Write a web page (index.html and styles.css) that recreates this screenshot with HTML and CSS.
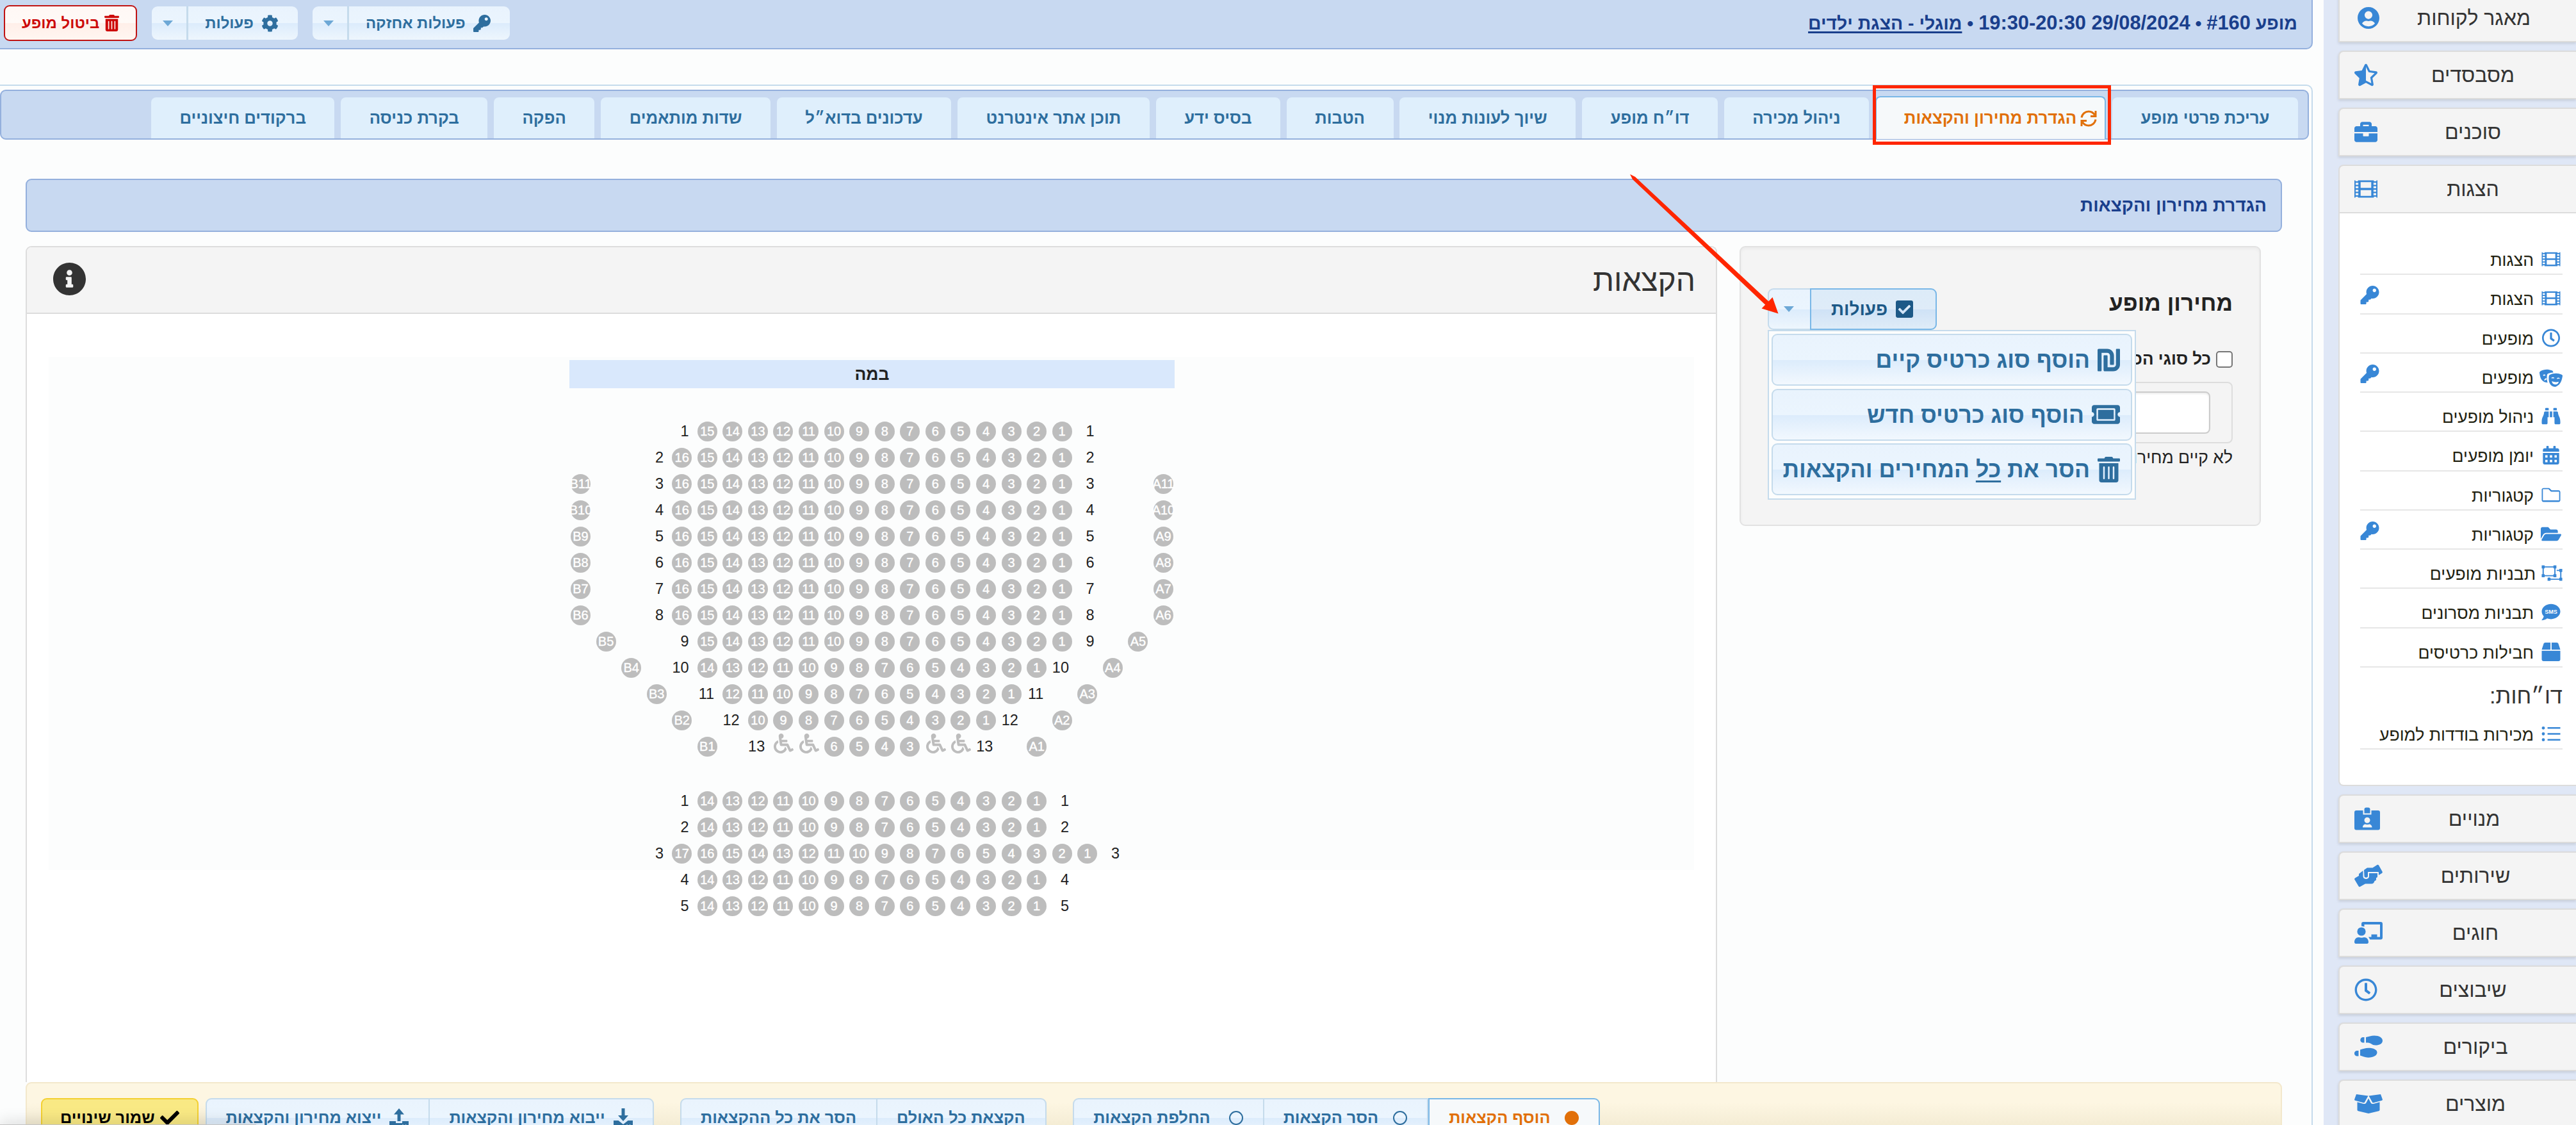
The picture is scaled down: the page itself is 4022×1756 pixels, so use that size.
FILE: index.html
```html
<!DOCTYPE html>
<html lang="he" dir="rtl">
<head>
  <meta charset="UTF-8">
  <meta name="viewport" content="width=device-width, initial-scale=1.0">
  <title>הגדרת מחירון והקצאות</title>
  <link rel="stylesheet" href="styles.css">
</head>
<body>
  <!-- icons -->
  <svg class="sprite" aria-hidden="true">
    <symbol id="i-key" viewBox="0 0 512 512"><path d="M512 176.001C512 273.203 433.202 352 336 352c-11.22 0-22.19-1.062-32.827-3.069l-24.012 27.014A23.999 23.999 0 0 1 261.223 384H224v40c0 13.255-10.745 24-24 24h-40v40c0 13.255-10.745 24-24 24H24c-13.255 0-24-10.745-24-24v-78.059c0-6.365 2.529-12.47 7.029-16.971l161.802-161.802C163.108 213.814 160 195.271 160 176 160 78.798 238.797.001 335.999 0 433.488-.001 512 78.511 512 176.001zM336 128c0 26.51 21.49 48 48 48s48-21.49 48-48-21.49-48-48-48-48 21.49-48 48z"/></symbol>
    <symbol id="i-trash" viewBox="0 0 448 512"><path d="M32 464a48 48 0 0 0 48 48h288a48 48 0 0 0 48-48V128H32zm272-256a16 16 0 0 1 32 0v224a16 16 0 0 1-32 0zm-96 0a16 16 0 0 1 32 0v224a16 16 0 0 1-32 0zm-96 0a16 16 0 0 1 32 0v224a16 16 0 0 1-32 0zM432 32H312l-9.4-18.7A24 24 0 0 0 281.1 0H166.8a23.72 23.72 0 0 0-21.4 13.3L136 32H16A16 16 0 0 0 0 48v32a16 16 0 0 0 16 16h416a16 16 0 0 0 16-16V48a16 16 0 0 0-16-16z"/></symbol>
    <symbol id="i-cog" viewBox="0 0 512 512"><path d="M487.4 315.7l-42.6-24.6c4.3-23.2 4.3-47 0-70.2l42.6-24.6c4.9-2.8 7.1-8.6 5.5-14-11.1-35.6-30-67.8-54.7-94.6-3.8-4.1-10-5.1-14.8-2.3L380.8 110c-17.9-15.4-38.5-27.3-60.8-35.1V25.8c0-5.6-3.9-10.5-9.4-11.7-36.7-8.2-74.3-7.8-109.2 0-5.5 1.2-9.4 6.1-9.4 11.7V75c-22.2 7.9-42.8 19.8-60.8 35.1L88.7 85.5c-4.9-2.8-11-1.9-14.8 2.3-24.7 26.7-43.6 58.9-54.7 94.6-1.7 5.4.6 11.2 5.5 14L67.3 221c-4.3 23.2-4.3 47 0 70.2l-42.6 24.6c-4.9 2.8-7.1 8.6-5.5 14 11.1 35.6 30 67.8 54.7 94.6 3.8 4.1 10 5.1 14.8 2.3l42.6-24.6c17.9 15.4 38.5 27.3 60.8 35.1v49.2c0 5.6 3.9 10.5 9.4 11.7 36.7 8.2 74.3 7.8 109.2 0 5.5-1.2 9.4-6.1 9.4-11.7v-49.2c22.2-7.9 42.8-19.8 60.8-35.1l42.6 24.6c4.9 2.8 11 1.9 14.8-2.3 24.7-26.7 43.6-58.9 54.7-94.6 1.5-5.5-.7-11.3-5.6-14.1zM256 336c-44.1 0-80-35.9-80-80s35.9-80 80-80 80 35.9 80 80-35.9 80-80 80z"/></symbol>
    <symbol id="i-info" viewBox="8 8 496 496"><path d="M256 8C119.043 8 8 119.083 8 256c0 136.997 111.043 248 248 248s248-111.003 248-248C504 119.083 392.957 8 256 8zm0 110c23.196 0 42 18.804 42 42s-18.804 42-42 42-42-18.804-42-42 18.804-42 42-42zm56 254c0 6.627-5.373 12-12 12h-88c-6.627 0-12-5.373-12-12v-24c0-6.627 5.373-12 12-12h12v-64h-12c-6.627 0-12-5.373-12-12v-24c0-6.627 5.373-12 12-12h64c6.627 0 12 5.373 12 12v100h12c6.627 0 12 5.373 12 12v24z"/></symbol>
    <symbol id="i-check-square" viewBox="0 32 448 448"><path d="M400 480H48c-26.51 0-48-21.49-48-48V80c0-26.51 21.49-48 48-48h352c26.51 0 48 21.49 48 48v352c0 26.51-21.49 48-48 48zm-204.686-98.059l184-184c6.248-6.248 6.248-16.379 0-22.627l-22.627-22.627c-6.248-6.248-16.379-6.249-22.628 0L184 302.745l-70.059-70.059c-6.248-6.248-16.379-6.248-22.628 0l-22.627 22.627c-6.248 6.248-6.248 16.379 0 22.627l104 104c6.249 6.25 16.379 6.25 22.628.001z"/></symbol>
    <symbol id="i-check" viewBox="0 0 512 512"><path d="M173.898 439.404l-166.4-166.4c-9.997-9.997-9.997-26.206 0-36.204l36.203-36.204c9.997-9.998 26.207-9.998 36.204 0L192 312.69 432.095 72.596c9.997-9.997 26.207-9.997 36.204 0l36.203 36.204c9.997 9.997 9.997 26.206 0 36.204l-294.4 294.401c-9.998 9.997-26.207 9.997-36.204-.001z"/></symbol>
    <symbol id="i-shekel" viewBox="0 0 448 512"><path d="M248 168v168c0 8.84 7.16 16 16 16h48c8.84 0 16-7.16 16-16V168c0-75.11-60.89-136-136-136H24C10.75 32 0 42.74 0 56v408c0 8.84 7.16 16 16 16h48c8.84 0 16-7.16 16-16V112h112c30.93 0 56 25.07 56 56zM432 32h-48c-8.84 0-16 7.16-16 16v296c0 30.93-25.07 56-56 56H200V176c0-8.84-7.16-16-16-16h-48c-8.84 0-16 7.16-16 16v280c0 13.25 10.75 24 24 24h168c75.11 0 136-60.89 136-136V48c0-8.84-7.16-16-16-16z"/></symbol>
    <symbol id="i-ticket" viewBox="0 0 576 512"><path d="M128 160h320v192H128V160zm400 96c0 26.51 21.49 48 48 48v96c0 26.51-21.49 48-48 48H48c-26.51 0-48-21.49-48-48v-96c26.51 0 48-21.49 48-48s-21.49-48-48-48v-96c0-26.51 21.49-48 48-48h480c26.51 0 48 21.49 48 48v96c-26.51 0-48 21.49-48 48zm-48-104c0-13.255-10.745-24-24-24H120c-13.255 0-24 10.745-24 24v208c0 13.255 10.745 24 24 24h336c13.255 0 24-10.745 24-24V152z"/></symbol>
    <symbol id="i-clock" viewBox="0 0 512 512"><path d="M256 8C119 8 8 119 8 256s111 248 248 248 248-111 248-248S393 8 256 8zm0 448c-110.5 0-200-89.5-200-200S145.5 56 256 56s200 89.5 200 200-89.5 200-200 200zm61.8-104.4l-84.9-61.7c-3.1-2.3-4.9-5.9-4.9-9.7V116c0-6.6 5.4-12 12-12h32c6.6 0 12 5.4 12 12v141.7l66.8 48.6c5.4 3.9 6.5 11.4 2.6 16.8L334.6 349c-3.9 5.3-11.4 6.5-16.8 2.6z"/></symbol>
    <symbol id="i-star" viewBox="0 0 536 512"><path d="M508.55 171.51L362.18 150.2 296.77 17.81C290.89 5.98 279.42 0 267.95 0c-11.4 0-22.79 5.9-28.69 17.81l-65.43 132.38-146.38 21.29c-26.25 3.8-36.77 36.09-17.74 54.59l105.89 103-25.06 145.48C86.98 495.33 103.57 512 122.15 512c4.93 0 10-1.17 14.87-3.75l130.95-68.68 130.94 68.7c4.86 2.55 9.92 3.71 14.83 3.71 18.6 0 35.22-16.61 31.66-37.4l-25.03-145.49 105.91-102.98c19.04-18.5 8.52-50.8-17.73-54.6zm-121.74 123.2l-18.12 17.62 4.28 24.88 19.52 113.45-102.13-53.59-22.38-11.74.03-317.19 51.03 103.29 11.18 22.63 25.01 3.64 114.23 16.63-82.65 80.38z"/></symbol>
    <symbol id="i-briefcase" viewBox="0 0 512 512"><path d="M320 336c0 8.84-7.16 16-16 16h-96c-8.84 0-16-7.16-16-16v-48H0v144c0 25.6 22.4 48 48 48h416c25.6 0 48-22.4 48-48V288H320v48zm144-208h-80V80c0-25.6-22.4-48-48-48H176c-25.6 0-48 22.4-48 48v48H48c-25.6 0-48 22.4-48 48v80h512v-80c0-25.6-22.4-48-48-48zm-144 0H192V96h128v32z"/></symbol>
    <symbol id="i-film" viewBox="0 0 512 512"><path fill-rule="evenodd" d="M0 64h24v22h56V64h352v22h56V64h24v384h-24v-22h-56v22H80v-22H24v22H0zM138 104v128h236V104zM138 280v128h236V280zM28 118v44h60v-44zM28 194v44h60v-44zM28 274v44h60v-44zM28 350v44h60v-44zM424 118v44h60v-44zM424 194v44h60v-44zM424 274v44h60v-44zM424 350v44h60v-44z"/></symbol>
    <symbol id="i-user" viewBox="0 8 496 496"><path d="M248 8C111 8 0 119 0 256s111 248 248 248 248-111 248-248S385 8 248 8zm0 96c48.6 0 88 39.4 88 88s-39.4 88-88 88-88-39.4-88-88 39.4-88 88-88zm0 344c-58.7 0-111.3-26.6-146.5-68.2 18.8-35.4 55.6-59.8 98.5-59.8 2.4 0 4.8.4 7.1 1.1 13 4.2 26.6 6.9 40.9 6.9 14.3 0 28-2.7 40.9-6.9 2.3-.7 4.7-1.1 7.1-1.1 42.9 0 79.7 24.4 98.5 59.8C359.3 421.4 306.7 448 248 448z"/></symbol>
    <symbol id="i-masks" viewBox="0 0 640 512"><path fill-rule="evenodd" d="M206 246c4-82 2-96 52-112 40-13 82-19 124-20-2-28-14-46-38-56C240 14 120 20 24 76 6 88-2 102 0 122c14 92 30 240 190 268 14 2 24 2 36 2-18-48-24-90-20-146zM98 190c12-24 48-30 68-10l-6 22c-16-8-34-4-48 6zM130 322c12-30 34-48 62-52l4 40c-18 0-32 8-44 24zM616 172c-98-50-222-50-330 4-14 8-22 18-24 34-12 112-6 226 106 286 30 16 66 20 98 4 126-58 154-174 174-292 2-16-8-28-24-36zM330 262c20-26 62-26 80-2l-8 18c-20-14-46-12-62 2zM464 444c-70 10-118-32-120-90 54 26 122 36 190 14-6 40-30 70-70 76zM482 276c18-26 60-28 80-2l-8 18c-20-12-44-12-62 2z"/></symbol>
    <symbol id="i-binoculars" viewBox="0 0 512 512"><path d="M416 48c0-8.84-7.16-16-16-16h-64c-8.84 0-16 7.16-16 16v48h96V48zM63.91 159.99C61.4 253.84 3.46 274.22 0 404v44c0 17.67 14.33 32 32 32h96c17.67 0 32-14.33 32-32V288h32V128H95.84c-17.63 0-31.45 14.37-31.93 31.99zm384.18 0c-.48-17.62-14.3-31.99-31.93-31.99H320v160h32v160c0 17.67 14.33 32 32 32h96c17.67 0 32-14.33 32-32v-44c-3.46-129.78-61.4-150.16-63.91-244.01zM176 32h-64c-8.84 0-16 7.16-16 16v48h96V48c0-8.84-7.16-16-16-16zm48 256h64V128h-64v160z"/></symbol>
    <symbol id="i-calendar" viewBox="0 0 448 512"><path fill-rule="evenodd" d="M0 464c0 26.5 21.5 48 48 48h352c26.5 0 48-21.5 48-48V192H0zM64 256h64v64H64zM192 256h64v64h-64zM320 256h64v64h-64zM64 384h64v64H64zM192 384h64v64h-64zM320 384h64v64h-64zM400 64h-48V16c0-8.8-7.2-16-16-16h-32c-8.8 0-16 7.2-16 16v48H160V16c0-8.8-7.2-16-16-16h-32c-8.8 0-16 7.2-16 16v48H48C21.5 64 0 85.5 0 112v48h448v-48c0-26.5-21.5-48-48-48z"/></symbol>
    <symbol id="i-folder" viewBox="0 0 512 512"><path d="M464 128H272l-54.63-54.63c-6-6-14.14-9.37-22.63-9.37H48C21.49 64 0 85.49 0 112v288c0 26.51 21.49 48 48 48h416c26.51 0 48-21.49 48-48V176c0-26.51-21.49-48-48-48zm16 280H32V96h155l55 60c6 6 14 10 23 10H480z"/></symbol>
    <symbol id="i-folder-open" viewBox="0 0 576 512"><path d="M572.694 292.093L500.27 416.248A63.997 63.997 0 0 1 444.989 448H45.025c-18.523 0-30.064-20.093-20.731-36.093l72.424-124.155A64 64 0 0 1 152 256h399.964c18.523 0 30.064 20.093 20.73 36.093zM152 224h328v-48c0-26.51-21.49-48-48-48H272l-64-64H48C21.49 64 0 85.49 0 112v278.046l69.077-118.418C86.214 242.25 117.989 224 152 224z"/></symbol>
    <symbol id="i-group" viewBox="0 40 576 416"><g fill="none" stroke="currentColor" stroke-width="34"><path d="M48 80h320v240H48zM416 176h112v240H208v-46"/></g><path fill-rule="evenodd" d="M8 40h80v80H8zm28 28v24h24V68zM328 40h80v80h-80zm28 28v24h24V68zM8 280h80v80H8zm28 28v24h24v-24zM328 280h80v80h-80zm28 28v24h24v-24zM488 136h80v80h-80zm28 28v24h24v-24zM488 376h80v80h-80zm28 28v24h24v-24zM168 376h80v80h-80zm28 28v24h24v-24z"/></symbol>
    <symbol id="i-box" viewBox="0 0 512 512"><path d="M509.5 184.6L458.9 32.8C452.4 13.2 434.1 0 413.4 0H272v192h238.7c-.4-2.5-.4-5-1.2-7.4zM240 0H98.6c-20.7 0-39 13.2-45.5 32.8L2.5 184.6c-.8 2.4-.8 4.9-1.2 7.4H240V0zM0 224v240c0 26.5 21.5 48 48 48h416c26.5 0 48-21.5 48-48V224H0z"/></symbol>
    <symbol id="i-list" viewBox="0 0 512 512"><path d="M160 72h352v44H160zM160 234h352v44H160zM160 396h352v44H160z"/><circle cx="44" cy="94" r="42"/><circle cx="44" cy="256" r="42"/><circle cx="44" cy="418" r="42"/></symbol>
    <symbol id="i-id" viewBox="0 0 40 35"><path fill-rule="evenodd" d="M3 4.500h10.500V11h13V4.500H37a3 3 0 0 1 3 3V32a3 3 0 0 1-3 3H3a3 3 0 0 1-3-3V7.500a3 3 0 0 1 3-3zM20 15.200a4.500 4.500 0 1 0 0 9 4.500 4.500 0 0 0 0-9zM13 31h14.500c0-3.500-2.500-5-4.500-5-2 .8-4 .8-5.500 0-2.500 0-4.500 1.500-4.500 5z"/><path d="M15.500 9V3a3 3 0 0 1 3-3h3a3 3 0 0 1 3 3v6z"/></symbol>
    <symbol id="i-hands" viewBox="0 0 44 35"><path d="M13.500 9.500V18c0 6 9.500 6 9.500 0v-4.500h13v5c0 1.500-1 2-2 2v2.500c0 1.500-1 2.500-2.500 2.500-.5 2.500-2 4.500-5 4.500h-9.500L9 34.500c-1 .6-2 .3-2.500-.7L.4 23.500c-.6-1-.3-2 .7-2.500L7 17.500V14.500z"/><path d="M15 8.500L20 5h8.500L35.500.5c1-.6 2-.3 2.500.6l5.600 10c.5 1 .2 1.800-.7 2.300l-5 3v-4.800H21V18c0 3-5.500 3-5.500 0z"/></symbol>
    <symbol id="i-class" viewBox="0 0 44 35"><path d="M11 7V3.500A3 3 0 0 1 14 .5h27a3 3 0 0 1 3 3V25a3 3 0 0 1-3 3H24.500l-2.500-4h4.500v-4h9v4h4.500V4.500H15.500V8z"/><circle cx="11" cy="15.500" r="6.600"/><path d="M0 32c0-4 2.500-7.500 7-7.500 3 1 5.500 1 8 0 4.500 0 7 3.500 7 7.500 0 1.500-1 2.500-2 2.500H2c-1 0-2-1-2-2.500z"/></symbol>
    <symbol id="i-shoes" viewBox="0 0 44 35"><path d="M18 2.500C22 1.500 26 0 31 0c8 0 13 3.500 13 8s-5 7-11 7c-6 0-7-4-12-4h-3zM15.500 2.500V11h-2a4.200 4.200 0 0 1 0-8.500zM9 22c4-1 8-2.700 13-2.700 8 0 13.500 2.700 13.500 7s-5 8-14 8c-5 0-8.500-2-12.500-3.200zM6.500 23.500V32H4.200a4.200 4.200 0 0 1 0-8.500z"/></symbol>
    <symbol id="i-open-box" viewBox="0 0 44 30"><path d="M3 0l18.500 2.500-5.500 10c-.4.7-1 1-2 .8L1.200 9.800C.2 9.500-.2 8.800.2 7.800zM41 0L22.500 2.500l5.500 10c.4.700 1 1 2 .8l12.800-3.500c1-.3 1.400-1 1-2zM22 6.500l-3.500 6.700c-.8 1.400-2.500 2.200-4.200 1.800L4.500 12.300v12c0 1 .7 1.800 1.700 2L22 30l15.800-3.700c1-.2 1.700-1 1.700-2v-12L29.700 15c-1.700.4-3.400-.4-4.200-1.800z"/></symbol>
    <symbol id="i-wheelchair" viewBox="0 0 512 512"><path d="M496.101 385.669l14.227 28.663c3.929 7.915.697 17.516-7.218 21.445l-65.465 32.886c-16.049 7.967-35.556 1.194-43.189-15.055L331.679 320H192c-15.925 0-29.426-11.71-31.679-27.475C126.433 55.308 128.38 70.044 128 64c0-36.358 30.318-65.635 67.052-63.929 33.271 1.545 60.048 28.905 60.925 62.201.868 32.933-23.152 60.423-54.608 65.039l4.67 32.69H336c8.837 0 16 7.163 16 16v32c0 8.837-7.163 16-16 16H215.182l4.572 32H352a32 32 0 0 1 28.962 18.392L438.477 396.8l36.178-18.349c7.915-3.929 17.517-.697 21.446 7.218zM311.358 352h-24.506c-7.788 54.204-54.528 96-110.852 96-61.757 0-112-50.243-112-112 0-41.505 22.694-77.809 56.324-97.156-3.712-25.965-6.844-47.86-9.488-66.333C45.956 198.464 0 261.963 0 336c0 97.047 78.953 176 176 176 71.87 0 133.806-43.308 161.11-105.192L311.358 352z"/></symbol>
    <symbol id="i-refresh" viewBox="0 0 26 26"><g fill="none" stroke="currentColor" stroke-width="3"><path d="M2 11.500C3 5.500 8 2 13 2c4 0 7.500 2 9.500 5.500M24 1v8.500H16M24 14.500c-1 6-6 9.500-11 9.500-4 0-7.500-2-9.500-5.500M2 25v-8.500H10"/></g></symbol>
    <symbol id="i-import" viewBox="0 0 30 30"><path fill-rule="evenodd" d="M12.500 0h5v11H23l-8 9-8-9h5.500zM0 19h7.500l7.500 6 7.500-6H30v9a2 2 0 0 1-2 2H2a2 2 0 0 1-2-2zM20 25.500v2h2v-2zM24.500 25.500v2h2v-2z"/></symbol>
    <symbol id="i-export" viewBox="0 0 30 30"><path fill-rule="evenodd" d="M12.500 20V9.500H7L15 0l8 9.500h-5.500V20zM0 20h10v3h10v-3h10v8a2 2 0 0 1-2 2H2a2 2 0 0 1-2-2zM20 25.500v2h2v-2zM24.500 25.500v2h2v-2z"/></symbol>
  </svg>

  <aside class="sidebar">
    <a class="menu-item"><span>מאגר לקוחות</span><svg class="w34"><use href="#i-user"/></svg></a>
    <a class="menu-item"><span>מסבסדים</span><svg class="w36"><use href="#i-star"/></svg></a>
    <a class="menu-item"><span>סוכנים</span><svg class="w36"><use href="#i-briefcase"/></svg></a>
    <a class="menu-item open"><span>הצגות</span><svg class="w36"><use href="#i-film"/></svg></a>
    <div class="submenu">
      <a class="sub-item"><svg><use href="#i-film"/></svg><span>הצגות</span></a>
      <a class="sub-item"><svg><use href="#i-film"/></svg><span>הצגות</span><svg class="key"><use href="#i-key"/></svg></a>
      <a class="sub-item"><svg><use href="#i-clock"/></svg><span>מופעים</span></a>
      <a class="sub-item"><svg class="big"><use href="#i-masks"/></svg><span>מופעים</span><svg class="key"><use href="#i-key"/></svg></a>
      <a class="sub-item"><svg><use href="#i-binoculars"/></svg><span>ניהול מופעים</span></a>
      <a class="sub-item"><svg><use href="#i-calendar"/></svg><span>יומן מופעים</span></a>
      <a class="sub-item"><svg><use href="#i-folder"/></svg><span>קטגוריות</span></a>
      <a class="sub-item"><svg class="mid"><use href="#i-folder-open"/></svg><span>קטגוריות</span><svg class="key"><use href="#i-key"/></svg></a>
      <a class="sub-item"><svg class="grp"><use href="#i-group"/></svg><span>תבניות מופעים</span></a>
      <a class="sub-item"><svg viewBox="0 0 512 512"><path d="M256 32C114.6 32 0 125.1 0 240c0 49.6 21.4 95 57 130.7C44.5 421.1 2.7 466 2.2 466.5c-2.2 2.3-2.8 5.7-1.5 8.7S4.8 480 8 480c66.3 0 116-31.8 140.6-51.4 32.7 12.3 69 19.4 107.4 19.4 141.4 0 256-93.1 256-208S397.4 32 256 32z"/><text x="256" y="296" class="sms-text">SMS</text></svg><span>תבניות מסרונים</span></a>
      <a class="sub-item"><svg><use href="#i-box"/></svg><span>חבילות כרטיסים</span></a>
      <div class="sub-title">דו״חות:</div>
      <a class="sub-item"><svg><use href="#i-list"/></svg><span>מכירות בודדות למופע</span></a>
    </div>
    <a class="menu-item"><span>מנויים</span><svg class="w40"><use href="#i-id"/></svg></a>
    <a class="menu-item"><span>שירותים</span><svg class="w44"><use href="#i-hands"/></svg></a>
    <a class="menu-item"><span>חוגים</span><svg class="w44"><use href="#i-class"/></svg></a>
    <a class="menu-item"><span>שיבוצים</span><svg class="w36"><use href="#i-clock"/></svg></a>
    <a class="menu-item"><span>ביקורים</span><svg class="w44"><use href="#i-shoes"/></svg></a>
    <a class="menu-item"><span>מוצרים</span><svg class="w44"><use href="#i-open-box"/></svg></a>
  </aside>

  <main class="main">
    <header class="event-bar">
      <h1>מופע <span class="num" dir="ltr">#160</span> • <span class="num" dir="ltr">19:30-20:30 29/08/2024</span> • <a>מוגלי - הצגת ילדים</a></h1>
      <div class="event-actions">
        <div class="split small">
          <button class="btn"><svg><use href="#i-key"/></svg>פעולות אחזקה</button>
          <button class="btn arrow"><i class="caret"></i></button>
        </div>
        <div class="split small">
          <button class="btn"><svg><use href="#i-cog"/></svg>פעולות</button>
          <button class="btn arrow"><i class="caret"></i></button>
        </div>
        <button class="btn cancel"><svg><use href="#i-trash"/></svg>ביטול מופע</button>
      </div>
    </header>

    <section class="tabs-box">
      <nav class="tabs">
        <a>עריכת פרטי מופע</a>
        <a class="active"><svg><use href="#i-refresh"/></svg>הגדרת מחירון והקצאות</a>
        <a>ניהול מכירה</a>
        <a>דו״ח מופע</a>
        <a>שיוך לעונות מנוי</a>
        <a>הטבות</a>
        <a>בסיס ידע</a>
        <a>תוכן אתר אינטרנט</a>
        <a>עדכונים בדוא״ל</a>
        <a>שדות מותאמים</a>
        <a>הפקה</a>
        <a>בקרת כניסה</a>
        <a>ברקודים חיצוניים</a>
      </nav>

      <h2 class="section-title">הגדרת מחירון והקצאות</h2>

      <div class="content">
        <div class="price-card">
          <div class="price-head">
            <h3>מחירון מופע</h3>
            <div class="split">
              <button class="btn hover"><svg><use href="#i-check-square"/></svg>פעולות</button>
              <button class="btn arrow"><i class="caret"></i></button>
              <div class="dropdown">
                <a><svg><use href="#i-shekel"/></svg><span>הוסף סוג כרטיס קיים</span></a>
                <a><svg class="ticket"><use href="#i-ticket"/></svg><span>הוסף סוג כרטיס חדש</span></a>
                <a><svg><use href="#i-trash"/></svg><span>הסר את <u>כל</u> המחירים והקצאות</span></a>
              </div>
            </div>
          </div>
          <label class="all-types"><i class="checkbox"></i>כל סוגי הכרטיסים</label>
          <div class="filter"><div class="field"></div></div>
          <p class="empty">לא קיים מחירון למופע</p>
        </div>

        <div class="alloc">
          <div class="alloc-head">
            <h3>הקצאות</h3>
            <svg><use href="#i-info"/></svg>
          </div>
          <div class="map">
            <div class="hall" id="hall" dir="ltr">
              <div class="stage">במה</div>
            </div>
          </div>
        </div>
      </div>

      <footer class="toolbar">
        <div class="group">
          <button class="btn active"><i class="dot full"></i>הוסף הקצאות</button>
          <button class="btn"><i class="dot"></i>הסר הקצאות</button>
          <button class="btn wide"><i class="dot"></i>החלפת הקצאות</button>
        </div>
        <div class="group">
          <button class="btn">הקצאת כל האולם</button>
          <button class="btn">הסר את כל ההקצאות</button>
        </div>
        <div class="group">
          <button class="btn"><svg><use href="#i-import"/></svg>ייבוא מחירון והקצאות</button>
          <button class="btn"><svg><use href="#i-export"/></svg>ייצוא מחירון והקצאות</button>
        </div>
        <button class="btn save"><svg><use href="#i-check"/></svg>שמור שינויים</button>
      </footer>
    </section>
  </main>

  <!-- guide marks over the page -->
  <div class="mark-box"></div>
  <svg class="mark-arrow" viewBox="0 0 240 225"><path d="M4 2l8 4L221 201l-5 5.500L8 10z"/><path d="M235.500 219.500l-26-8 17-17.500z"/></svg>
  <div class="status-edge"></div>

  <script>
    // c = column of the first seat, n = highest seat number, l/r = label columns
    // a/b = side seats: [column, name]
    const upper = [
      { row: 1, l: 4, c: 5, n: 15, r: 20 },
      { row: 2, l: 3, c: 4, n: 16, r: 20 },
      { row: 3, l: 3, c: 4, n: 16, r: 20, b: [0, 'B11'], a: [23, 'A11'] },
      { row: 4, l: 3, c: 4, n: 16, r: 20, b: [0, 'B10'], a: [23, 'A10'] },
      { row: 5, l: 3, c: 4, n: 16, r: 20, b: [0, 'B9'], a: [23, 'A9'] },
      { row: 6, l: 3, c: 4, n: 16, r: 20, b: [0, 'B8'], a: [23, 'A8'] },
      { row: 7, l: 3, c: 4, n: 16, r: 20, b: [0, 'B7'], a: [23, 'A7'] },
      { row: 8, l: 3, c: 4, n: 16, r: 20, b: [0, 'B6'], a: [23, 'A6'] },
      { row: 9, l: 4, c: 5, n: 15, r: 20, b: [1, 'B5'], a: [22, 'A5'] },
      { row: 10, l: 4, c: 5, n: 14, r: 19, b: [2, 'B4'], a: [21, 'A4'] },
      { row: 11, l: 5, c: 6, n: 12, r: 18, b: [3, 'B3'], a: [20, 'A3'] },
      { row: 12, l: 6, c: 7, n: 10, r: 17, b: [4, 'B2'], a: [19, 'A2'] },
      { row: 13, l: 7, c: 8, n: 8, r: 16, b: [5, 'B1'], a: [18, 'A1'], wheels: [8, 7, 2, 1] }
    ];
    const lower = [
      { row: 1, l: 4, c: 5, n: 14, r: 19 },
      { row: 2, l: 4, c: 5, n: 14, r: 19 },
      { row: 3, l: 3, c: 4, n: 17, r: 21 },
      { row: 4, l: 4, c: 5, n: 14, r: 19 },
      { row: 5, l: 4, c: 5, n: 14, r: 19 }
    ];

    function cell(cls, col, html) {
      return `<span class="${cls}" style="grid-column:${col + 1}">${html}</span>`;
    }

    function drawBlock(rows) {
      const block = document.createElement('div');
      block.className = 'block';
      for (const r of rows) {
        let html = '';
        if (r.b) html += cell('seat', r.b[0], r.b[1]);
        html += cell('label', r.l, r.row);
        for (let i = 0; i < r.n; i++) {
          const num = r.n - i;
          if (r.wheels && r.wheels.includes(num)) {
            html += cell('wheel', r.c + i, '<svg><use href="#i-wheelchair"/></svg>');
          } else {
            html += cell('seat', r.c + i, num);
          }
        }
        html += cell('label', r.r, r.row);
        if (r.a) html += cell('seat', r.a[0], r.a[1]);
        const line = document.createElement('div');
        line.className = 'row';
        line.innerHTML = html;
        block.appendChild(line);
      }
      document.getElementById('hall').appendChild(block);
    }

    drawBlock(upper);
    drawBlock(lower);
  </script>
</body>
</html>
```
FILE: styles.css
```css
* {
  box-sizing: border-box;
}
body {
  margin: 0;
  height: 1756px;
  overflow: hidden;
  position: relative;
  display: flex;
  background: #fcfdfd;
  color: #222;
  font-family: "Liberation Sans", Arial, sans-serif;
}
h1, h2, h3, p {
  margin: 0;
}
svg {
  fill: currentColor;
  flex: none;
}
.sprite {
  position: absolute;
  width: 0;
  height: 0;
}

/* sidebar */
.sidebar {
  width: 394px;
  height: 1756px;
  overflow: hidden;
  flex: none;
  padding-left: 23px;
  background: #dfe7f6;
}
.menu-item {
  display: flex;
  align-items: center;
  height: 76px;
  margin-bottom: 13px;
  padding: 0 12px 0 23px;
  border: 2px solid #dcdcdc;
  border-right: none;
  border-radius: 8px 0 0 0;
  background: #f4f4f4;
  box-shadow: 0 2px 4px rgba(0, 0, 0, 0.12);
  font-size: 32px;
  color: #333;
}
.menu-item:first-child {
  margin-top: -10px;
}
.menu-item.open {
  margin-bottom: 0;
  box-shadow: none;
}
.menu-item span {
  flex: 1;
  text-align: center;
}
.menu-item svg, .sub-item svg {
  color: #3887d6;
}
.menu-item svg {
  height: 36px;
}
.menu-item .w34 {
  width: 34px;
  height: 34px;
  margin-left: 5px;
}
.w36 {
  width: 36px;
}
.w40 {
  width: 40px;
}
.w44 {
  width: 44px;
}
.submenu {
  height: 894px;
  margin-bottom: 13px;
  padding: 35px 21px 0 32px;
  border: 2px solid #dcdcdc;
  border-top: none;
  border-right: none;
  border-radius: 0 0 0 8px;
  background: #fff;
}
.sub-item {
  display: flex;
  align-items: center;
  gap: 9px;
  height: 61.25px;
  padding-top: 18px;
  border-bottom: 2px solid #e6e6e6;
  font-size: 26.55px;
  color: #222211;
}
.sub-item svg {
  width: 30px;
  height: 29px;
  margin: 0 3px 4px;
}
.sub-item .big {
  width: 36px;
  margin: 0 0 2px;
}
.sub-item .mid {
  width: 32px;
  margin: 0 2px 4px;
}
.sub-item .grp {
  width: 33px;
  margin: 0 0 4px;
}
.sub-item .key {
  margin: 0 auto 14px 0;
}
.sub-item .sms-text {
  font: bold 160px "Liberation Sans", sans-serif;
  text-anchor: middle;
  fill: #fff;
  direction: ltr;
}
.sub-title {
  display: flex;
  align-items: center;
  height: 67px;
  padding-top: 23px;
  font-size: 34.5px;
  color: #333;
}

/* event header */
.main {
  flex: 1;
  min-width: 0;
  padding-right: 17px;
}
.event-bar {
  display: flex;
  align-items: center;
  justify-content: space-between;
  height: 77px;
  padding: 0 22px 3px 6px;
  border: 2px solid #94b0dd;
  border-width: 0 2px 2px 0;
  border-radius: 0 0 10px 0;
  background: #c8d9f1;
}
.event-bar h1 {
  font-size: 28.4px;
  color: #1a3f8c;
  white-space: nowrap;
}
.event-bar a {
  text-decoration: underline;
  text-decoration-thickness: 3px;
  text-underline-offset: 3px;
}
.num {
  font-size: 30.8px;
}
.event-actions {
  display: flex;
  align-items: center;
  gap: 23px;
}
.btn {
  display: flex;
  align-items: center;
  gap: 13px;
  border: 2px solid #c5dbec;
  background: linear-gradient(#e9f3fd 0%, #ebf5fe 50%, #dcecfc 51%, #eef6fd 100%);
  color: #2e6e9e;
  font: bold 27.9px "Liberation Sans", Arial, sans-serif;
  white-space: nowrap;
}
.split {
  display: flex;
  position: relative;
  height: 65px;
}
.split .btn {
  border-radius: 0 9px 9px 0;
  padding: 0 35px 0 31px;
}
.split .btn svg {
  width: 27px;
  height: 27px;
}
.split .arrow {
  width: 66px;
  padding: 0 3px 0 0;
  justify-content: center;
  border-left-width: 2px;
  border-right: none;
  border-radius: 9px 0 0 9px;
}
.caret {
  border: 8px solid transparent;
  border-top: 9px solid #6da8d6;
  border-bottom: none;
}
.split.small {
  height: 52px;
}
.split.small .btn {
  border: none;
  padding: 0 30px 0 26px;
  gap: 12px;
  font-size: 23.9px;
}
.split.small .arrow {
  width: 57px;
  padding: 0 4px 0 0;
  border-right: 3px solid #c5dbec;
}
.split .hover {
  border-color: #79b7e7;
  color: #1d5987;
  background: linear-gradient(#dcebf8 0%, #dfecf8 50%, #cfe2f6 51%, #dfecf8 100%);
}
.cancel {
  height: 56px;
  padding: 0 26px;
  gap: 8px;
  border-color: #c01414;
  border-radius: 9px;
  background: linear-gradient(#fff8f5 0%, #fffaf7 50%, #ffefe9 51%, #fff6f1 100%);
  color: #cd0a0a;
  font-size: 23.9px;
}
.cancel svg {
  width: 23px;
  height: 26px;
}

/* tabs */
.tabs-box {
  height: 1624px;
  margin-top: 55px;
  padding: 6px 4px 0 0;
  border: 2px solid #c5dbec;
  border-width: 2px 2px 0 0;
  border-radius: 0 10px 0 0;
}
.tabs {
  display: flex;
  gap: 9.7px;
  height: 78px;
  padding: 10px 15px 0 0;
  border: 2px solid #94b0dd;
  border-radius: 9px;
  background: #c8d9f1;
}
.tabs a {
  display: flex;
  align-items: center;
  height: 64px;
  padding: 0 44.6px;
  border-radius: 8px 8px 0 0;
  background: #dfeffc;
  color: #2e6e9e;
  font-size: 25.7px;
  font-weight: bold;
  white-space: nowrap;
}
.tabs .active {
  gap: 6px;
  height: 67px;
  margin-top: -2px;
  padding: 0 12px 0 43px;
  border: 2px solid #79b7e7;
  border-bottom: none;
  background: #f6f9fa;
  color: #e17009;
  font-size: 25.9px;
}
.tabs .active svg {
  width: 26px;
  height: 26px;
}
.section-title {
  display: flex;
  align-items: center;
  height: 83px;
  margin: 61px 42px 22px 40px;
  padding: 0 22px;
  border: 2px solid #94b0dd;
  border-radius: 9px;
  background: #c8d9f1;
  color: #1a3f8c;
  font-size: 27.96px;
}

/* content */
.content {
  display: flex;
  align-items: flex-start;
  gap: 35px;
  height: 1305px;
  margin: 0 75px 0 40px;
}
.price-card {
  flex: none;
  width: 814px;
  height: 437px;
  padding: 64px 42px 0 42px;
  border: 2px solid #e2e2e2;
  border-radius: 9px;
  background: #f4f4f4;
  box-shadow: inset 0 3px 4px rgba(0, 0, 0, 0.04);
}
.price-head {
  display: flex;
  justify-content: space-between;
}
.price-head h3 {
  padding-top: 3px;
  font-size: 35.2px;
}
.dropdown {
  position: absolute;
  top: 65px;
  left: 0;
  z-index: 2;
  display: flex;
  flex-direction: column;
  gap: 4.5px;
  width: 575px;
  height: 265px;
  padding: 4px;
  border: 2px solid #c5dbec;
  background: #fcfdfd;
}
.dropdown a {
  display: flex;
  align-items: center;
  gap: 12px;
  height: 81px;
  padding: 0 17px;
  border: 2px solid #c5dbec;
  border-radius: 9px;
  background: linear-gradient(#e9f3fd 0%, #ebf5fe 50%, #dcecfc 51%, #f2f8fe 100%);
  color: #2e6e9e;
  font-size: 35.55px;
  font-weight: bold;
  white-space: nowrap;
}
.dropdown span {
  padding-top: 2px;
}
.dropdown svg {
  width: 35px;
  height: 40px;
}
.dropdown .ticket {
  width: 44px;
}
.dropdown u {
  text-decoration-thickness: 3px;
  text-underline-offset: 5px;
}
.all-types {
  display: flex;
  align-items: center;
  gap: 8px;
  height: 38px;
  margin-top: 30px;
  padding-bottom: 7px;
  font-size: 26px;
  font-weight: bold;
}
.checkbox {
  width: 26px;
  height: 26px;
  border: 2px solid #767676;
  border-radius: 5px;
  background: #fff;
}
.filter {
  height: 96px;
  margin-top: 13px;
  padding: 13px 33px 0;
  border: 2px solid #ddd;
  border-radius: 8px;
}
.field {
  height: 66px;
  border: 2px solid #ccc;
  border-radius: 8px;
  background: #fff;
  box-shadow: inset 0 2px 3px rgba(0, 0, 0, 0.08);
}
.empty {
  margin-top: 7px;
  font-size: 26.5px;
  line-height: 30px;
}
.alloc {
  flex: 1;
  height: 1305px;
  border: 2px solid #ddd;
  border-bottom: none;
  border-radius: 9px 9px 0 0;
  background: #fff;
  overflow: hidden;
}
.alloc-head {
  display: flex;
  align-items: center;
  justify-content: space-between;
  height: 104px;
  padding: 0 32px 4px 41px;
  border-bottom: 2px solid #ddd;
  background: #f4f4f4;
  color: #333;
}
.alloc-head h3 {
  font-size: 47.8px;
  font-weight: normal;
  padding-top: 4px;
}
.alloc-head svg {
  width: 51px;
  height: 51px;
}

/* seat map */
.map {
  display: flex;
  justify-content: center;
  height: 801px;
  margin: 67px 34px 0;
  padding-top: 5px;
  background: #fcfdfd;
}
.stage {
  height: 44px;
  margin: 0 2px 47px;
  background: #d9e8fc;
  font-size: 26.5px;
  font-weight: bold;
  line-height: 45px;
  text-align: center;
}
.hall {
  width: 949.6px;
  margin-left: 2px;
}
.block {
  margin-bottom: 44px;
}
.row {
  display: grid;
  grid-template-columns: repeat(24, 39.565px);
  grid-template-rows: 41px;
  align-items: center;
  justify-items: center;
}
.row span {
  grid-row: 1;
}
.seat {
  display: flex;
  align-items: center;
  justify-content: center;
  width: 31px;
  height: 31px;
  border-radius: 50%;
  background: #bdbdbd;
  color: #fff;
  font-size: 20px;
  -webkit-text-stroke: 0.4px #fff;
}
.label {
  justify-self: end;
  padding-right: 9px;
  font-size: 23.5px;
}
.wheel svg {
  display: block;
  width: 31px;
  height: 31px;
  margin: 0 0 10px 2px;
  color: #bdbdbd;
}

/* bottom toolbar */
.toolbar {
  display: flex;
  justify-content: flex-end;
  height: 90px;
  margin: 0 42px 0 40px;
  padding: 23px 0 0 22px;
  border: 2px solid #f3e8cc;
  border-radius: 9px 9px 0 0;
  background: linear-gradient(#fdf6e2 0, #fdf6e2 30px, #f4ecd4 66px);
}
.group {
  display: flex;
  margin-left: 41.5px;
}
.group:nth-child(3) {
  margin-left: 11px;
}
.toolbar .btn {
  height: 61px;
  padding: 0 31px 0 30px;
  border-left-width: 0;
  font-size: 25.3px;
}
.toolbar .btn:last-child {
  border-left-width: 2px;
  border-radius: 9px 0 0 9px;
}
.toolbar .btn:first-child {
  border-radius: 0 9px 9px 0;
}
.toolbar .btn svg {
  width: 30px;
  height: 30px;
}
.toolbar .active {
  gap: 23px;
  border: 2px solid #79b7e7;
  background: #f6f9fb;
  color: #e17009;
}
.dot {
  width: 22px;
  height: 22px;
  margin-left: 10px;
  border: 2px solid #2e6e9e;
  border-radius: 50%;
}
.wide .dot {
  margin-left: 16px;
}
.dot.full {
  margin: 0;
  border: none;
  background: #e17009;
}
.toolbar .btn.save {
  gap: 8px;
  padding: 0 28px;
  border: 2px solid #f3d032;
  border-radius: 9px;
  background: #f9e984;
  color: #000;
}

/* guide marks */
.mark-box {
  position: absolute;
  left: 2924px;
  top: 133px;
  width: 372px;
  height: 93px;
  border: 5px solid #ff2600;
}
.mark-arrow {
  position: absolute;
  left: 2541px;
  top: 270px;
  z-index: 3;
  width: 240px;
  height: 225px;
  color: #ff2600;
}
.status-edge {
  position: absolute;
  left: 0;
  top: 1755px;
  width: 400px;
  height: 10px;
  background: #c4c4c4;
  box-shadow: 0 0 24px rgba(0, 0, 0, 0.25);
}
```
